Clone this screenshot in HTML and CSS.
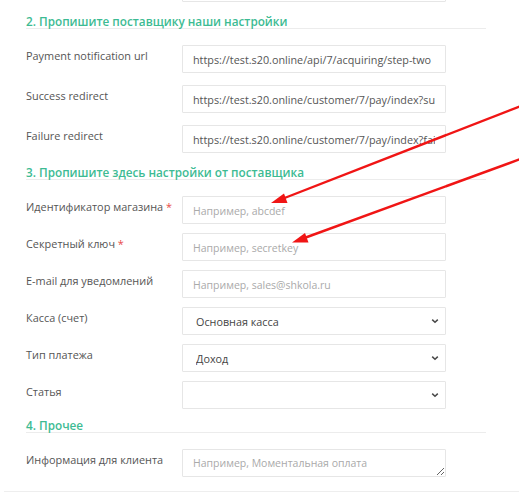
FILE: index.html
```html
<!DOCTYPE html>
<html lang="ru">
<head>
<meta charset="utf-8">
<link rel="stylesheet" href="styles.css">
</head>
<body>
<div class="page">
  <div class="form">
    <div class="row row-top">
      <label class="lbl">&nbsp;</label>
      <input class="field" type="text" value="">
    </div>

    <h3 class="heading">2. Пропишите поставщику наши настройки</h3>
    <div class="section sec-wide">
      <div class="row">
        <label class="lbl">Payment notification url</label>
        <input class="field" type="text" value="https://test.s20.online/api/7/acquiring/step-two">
      </div>
      <div class="row">
        <label class="lbl">Success redirect</label>
        <input class="field" type="text" value="https://test.s20.online/customer/7/pay/index?success">
      </div>
      <div class="row">
        <label class="lbl">Failure redirect</label>
        <input class="field" type="text" value="https://test.s20.online/customer/7/pay/index?fail">
      </div>
    </div>

    <h3 class="heading">3. Пропишите здесь настройки от поставщика</h3>
    <div class="section">
      <div class="row">
        <label class="lbl">Идентификатор магазина <span class="req">*</span></label>
        <input class="field" type="text" placeholder="Например, abcdef">
      </div>
      <div class="row">
        <label class="lbl">Секретный ключ <span class="req">*</span></label>
        <input class="field" type="text" placeholder="Например, secretkey">
      </div>
      <div class="row">
        <label class="lbl">E-mail для уведомлений</label>
        <input class="field" type="text" placeholder="Например, sales@shkola.ru">
      </div>
      <div class="row">
        <label class="lbl">Касса (счет)</label>
        <div class="select-wrap">
          <select class="field sel"><option>Основная касса</option></select>
          <svg class="chev" width="8" height="6" viewBox="0 0 8 6"><path d="M1.2 1.6 L4 4.3 L6.8 1.6" fill="none" stroke="#4a4a4a" stroke-width="1.5"/></svg>
        </div>
      </div>
      <div class="row">
        <label class="lbl">Тип платежа</label>
        <div class="select-wrap">
          <select class="field sel"><option>Доход</option></select>
          <svg class="chev" width="8" height="6" viewBox="0 0 8 6"><path d="M1.2 1.6 L4 4.3 L6.8 1.6" fill="none" stroke="#4a4a4a" stroke-width="1.5"/></svg>
        </div>
      </div>
      <div class="row">
        <label class="lbl">Статья</label>
        <div class="select-wrap">
          <select class="field sel"><option></option></select>
          <svg class="chev" width="8" height="6" viewBox="0 0 8 6"><path d="M1.2 1.6 L4 4.3 L6.8 1.6" fill="none" stroke="#4a4a4a" stroke-width="1.5"/></svg>
        </div>
      </div>
    </div>

    <h3 class="heading">4. Прочее</h3>
    <div class="section">
      <div class="row">
        <label class="lbl">Информация для клиента</label>
        <textarea class="field area" placeholder="Например, Моментальная оплата"></textarea>
      </div>
    </div>
  </div>
  <div class="footer-line"></div>

  <svg class="arrows" width="519" height="492" viewBox="0 0 519 492">
    <line x1="522" y1="105.5" x2="282" y2="199" stroke="#f01515" stroke-width="2.4"/>
    <polygon points="271,203 284,193.5 287.5,203" fill="#f01515"/>
    <line x1="522" y1="158.5" x2="303" y2="238.5" stroke="#f01515" stroke-width="2.4"/>
    <polygon points="292,242.5 305,233 308.5,242.5" fill="#f01515"/>
  </svg>
</div>
</body>
</html>
```

FILE: styles.css
```css
* { box-sizing: border-box; }
html, body {
  margin: 0;
  padding: 0;
  background: #fff;
  overflow: hidden;
}
body {
  font-family: "Open Sans", "Noto Sans", sans-serif;
  color: #555;
  font-size: 11px;
}
.page {
  position: relative;
  width: 519px;
  height: 492px;
  overflow: hidden;
}
.form {
  width: 486px;
  padding-left: 26px;
}
.row-top {
  margin-top: -26px;
  margin-bottom: 12px;
}
.heading {
  margin: 0 0 16px 0;
  font-size: 11.75px;
  line-height: 14px;
  font-weight: 600;
  color: #3dbb93;
  border-bottom: 1px solid #ececec;
  padding-bottom: 0;
}
.section .row { margin-bottom: 9px; }
.sec-wide .row { margin-bottom: 12px; }
.row {
  display: grid;
  grid-template-columns: 156px 264px;
  align-items: start;
}
.lbl {
  padding-top: 3px;
  line-height: 16px;
  font-size: 10.9px;
  color: #555;
  white-space: nowrap;
}
.req { color: #e84a4a; }
.field {
  display: block;
  width: 264px;
  height: 28px;
  border: 1px solid #e6e6e6;
  border-radius: 1px;
  background: #fff;
  font-family: "Open Sans", "Noto Sans", sans-serif;
  font-size: 10.8px;
  color: #555;
  padding: 0 10px;
  margin: 0;
  outline: none;
}
.field::placeholder { color: #aaa; font-size: 10.5px; }
.select-wrap { position: relative; width: 264px; }
.sel {
  appearance: none;
  -webkit-appearance: none;
  padding-left: 13px;
  color: #444;
}
.chev {
  position: absolute;
  right: 7px;
  top: 11px;
  pointer-events: none;
}
.area {
  resize: vertical;
  padding: 6px 10px;
  line-height: 14px;
}
.footer-line {
  margin-top: 14px;
  margin-left: 4px;
  border-top: 1px solid #eeeeee;
}
.arrows {
  position: absolute;
  left: 0;
  top: 0;
  pointer-events: none;
}
```
